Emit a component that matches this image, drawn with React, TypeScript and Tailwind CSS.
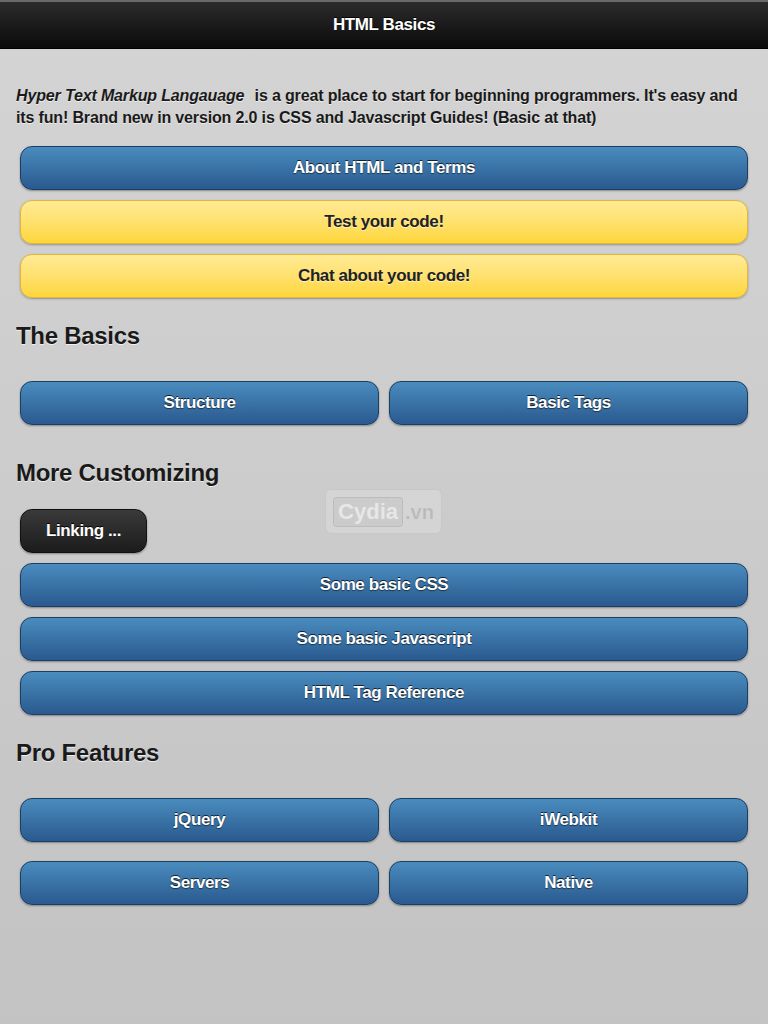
import React from "react";

const blue =
  "h-[44px] w-full rounded-[12px] border border-[#1c3d64] bg-gradient-to-b from-[#4a8cbe] to-[#2a5a8f] text-white font-bold text-[17px] tracking-[-0.4px] [text-shadow:0_-1px_0_#123,0_1px_1px_rgba(0,0,0,0.5)] shadow-[0_1px_2px_rgba(0,0,0,0.35)] flex items-center justify-center";
const yellow =
  "h-[44px] w-full rounded-[12px] border border-[#e3b53a] bg-gradient-to-b from-[#ffeb94] to-[#fed637] text-[#222] font-bold text-[17px] tracking-[-0.4px] [text-shadow:0_1px_0_rgba(255,255,255,0.6)] shadow-[0_1px_2px_rgba(0,0,0,0.3)] flex items-center justify-center";

function Blue({ children }: { children: React.ReactNode }) {
  return <div className={blue}>{children}</div>;
}
function Yellow({ children }: { children: React.ReactNode }) {
  return <div className={yellow}>{children}</div>;
}
function H({ children }: { children: React.ReactNode }) {
  return (
    <h2 className="text-[24px] font-bold text-[#1a1a1a] leading-[28px] tracking-[-0.3px] [text-shadow:0_1px_0_rgba(255,255,255,0.7)]">
      {children}
    </h2>
  );
}

export default function App() {
  return (
    <div
      className="w-[768px] h-[1024px] overflow-hidden bg-gradient-to-b from-[#d4d4d4] to-[#c3c3c3] flex flex-col"
      style={{ fontFamily: '"Liberation Sans", Arial, sans-serif' }}
    >
      <div className="h-[49px] shrink-0 bg-gradient-to-b from-[#2c2c2c] to-[#0b0b0b] border-t-[2px] border-[#6a6a6a] border-b border-b-[#000] flex items-center justify-center">
        <span className="text-white font-bold text-[17px] tracking-[-0.4px] [text-shadow:0_-1px_0_#000]">HTML Basics</span>
      </div>

      <div className="px-[16px] pt-[36px] text-[16px] leading-[22px] font-bold text-[#1a1a1a] tracking-[-0.15px] [text-shadow:0_1px_0_rgba(255,255,255,0.6)]">
        <i className="pr-[6px]">Hyper Text Markup Langauage</i> is a great place to start for beginning programmers. It's easy and its fun! Brand new in version 2.0 is CSS and Javascript Guides! (Basic at that)
      </div>

      <div className="px-[20px] mt-[17px] flex flex-col gap-[10px]">
        <Blue>About HTML and Terms</Blue>
        <Yellow>Test your code!</Yellow>
        <Yellow>Chat about your code!</Yellow>
      </div>

      <div className="px-[16px] mt-[24px]">
        <H>The Basics</H>
      </div>
      <div className="px-[20px] mt-[31px] grid grid-cols-2 gap-[10px]">
        <Blue>Structure</Blue>
        <Blue>Basic Tags</Blue>
      </div>

      <div className="px-[16px] mt-[34px]">
        <H>More Customizing</H>
      </div>
      <div className="px-[20px] mt-[22px] flex flex-col gap-[10px]">
        <div className="relative">
          <div className="h-[44px] w-[127px] rounded-[12px] border border-[#111] bg-gradient-to-b from-[#3a3a3a] to-[#1c1c1c] text-white font-bold text-[17px] tracking-[-0.4px] [text-shadow:0_-1px_0_#000] shadow-[0_1px_2px_rgba(0,0,0,0.35)] flex items-center justify-center">
            Linking ...
          </div>
          <div className="absolute left-[305px] top-[-20px] w-[117px] h-[45px] rounded-[6px] bg-[rgba(255,255,255,0.18)] border border-[rgba(0,0,0,0.06)] flex items-center justify-center gap-[2px]">
            <span className="px-[4px] rounded-[4px] border border-[rgba(0,0,0,0.08)] bg-[rgba(0,0,0,0.04)] text-[22px] font-bold text-[rgba(255,255,255,0.55)] leading-[28px]">
              Cydia
            </span>
            <span className="text-[20px] font-bold text-[rgba(0,0,0,0.12)]">.vn</span>
          </div>
        </div>
        <Blue>Some basic CSS</Blue>
        <Blue>Some basic Javascript</Blue>
        <Blue>HTML Tag Reference</Blue>
      </div>

      <div className="px-[16px] mt-[24px]">
        <H>Pro Features</H>
      </div>
      <div className="px-[20px] mt-[31px] grid grid-cols-2 gap-x-[10px] gap-y-[19px]">
        <Blue>jQuery</Blue>
        <Blue>iWebkit</Blue>
        <Blue>Servers</Blue>
        <Blue>Native</Blue>
      </div>
    </div>
  );
}
